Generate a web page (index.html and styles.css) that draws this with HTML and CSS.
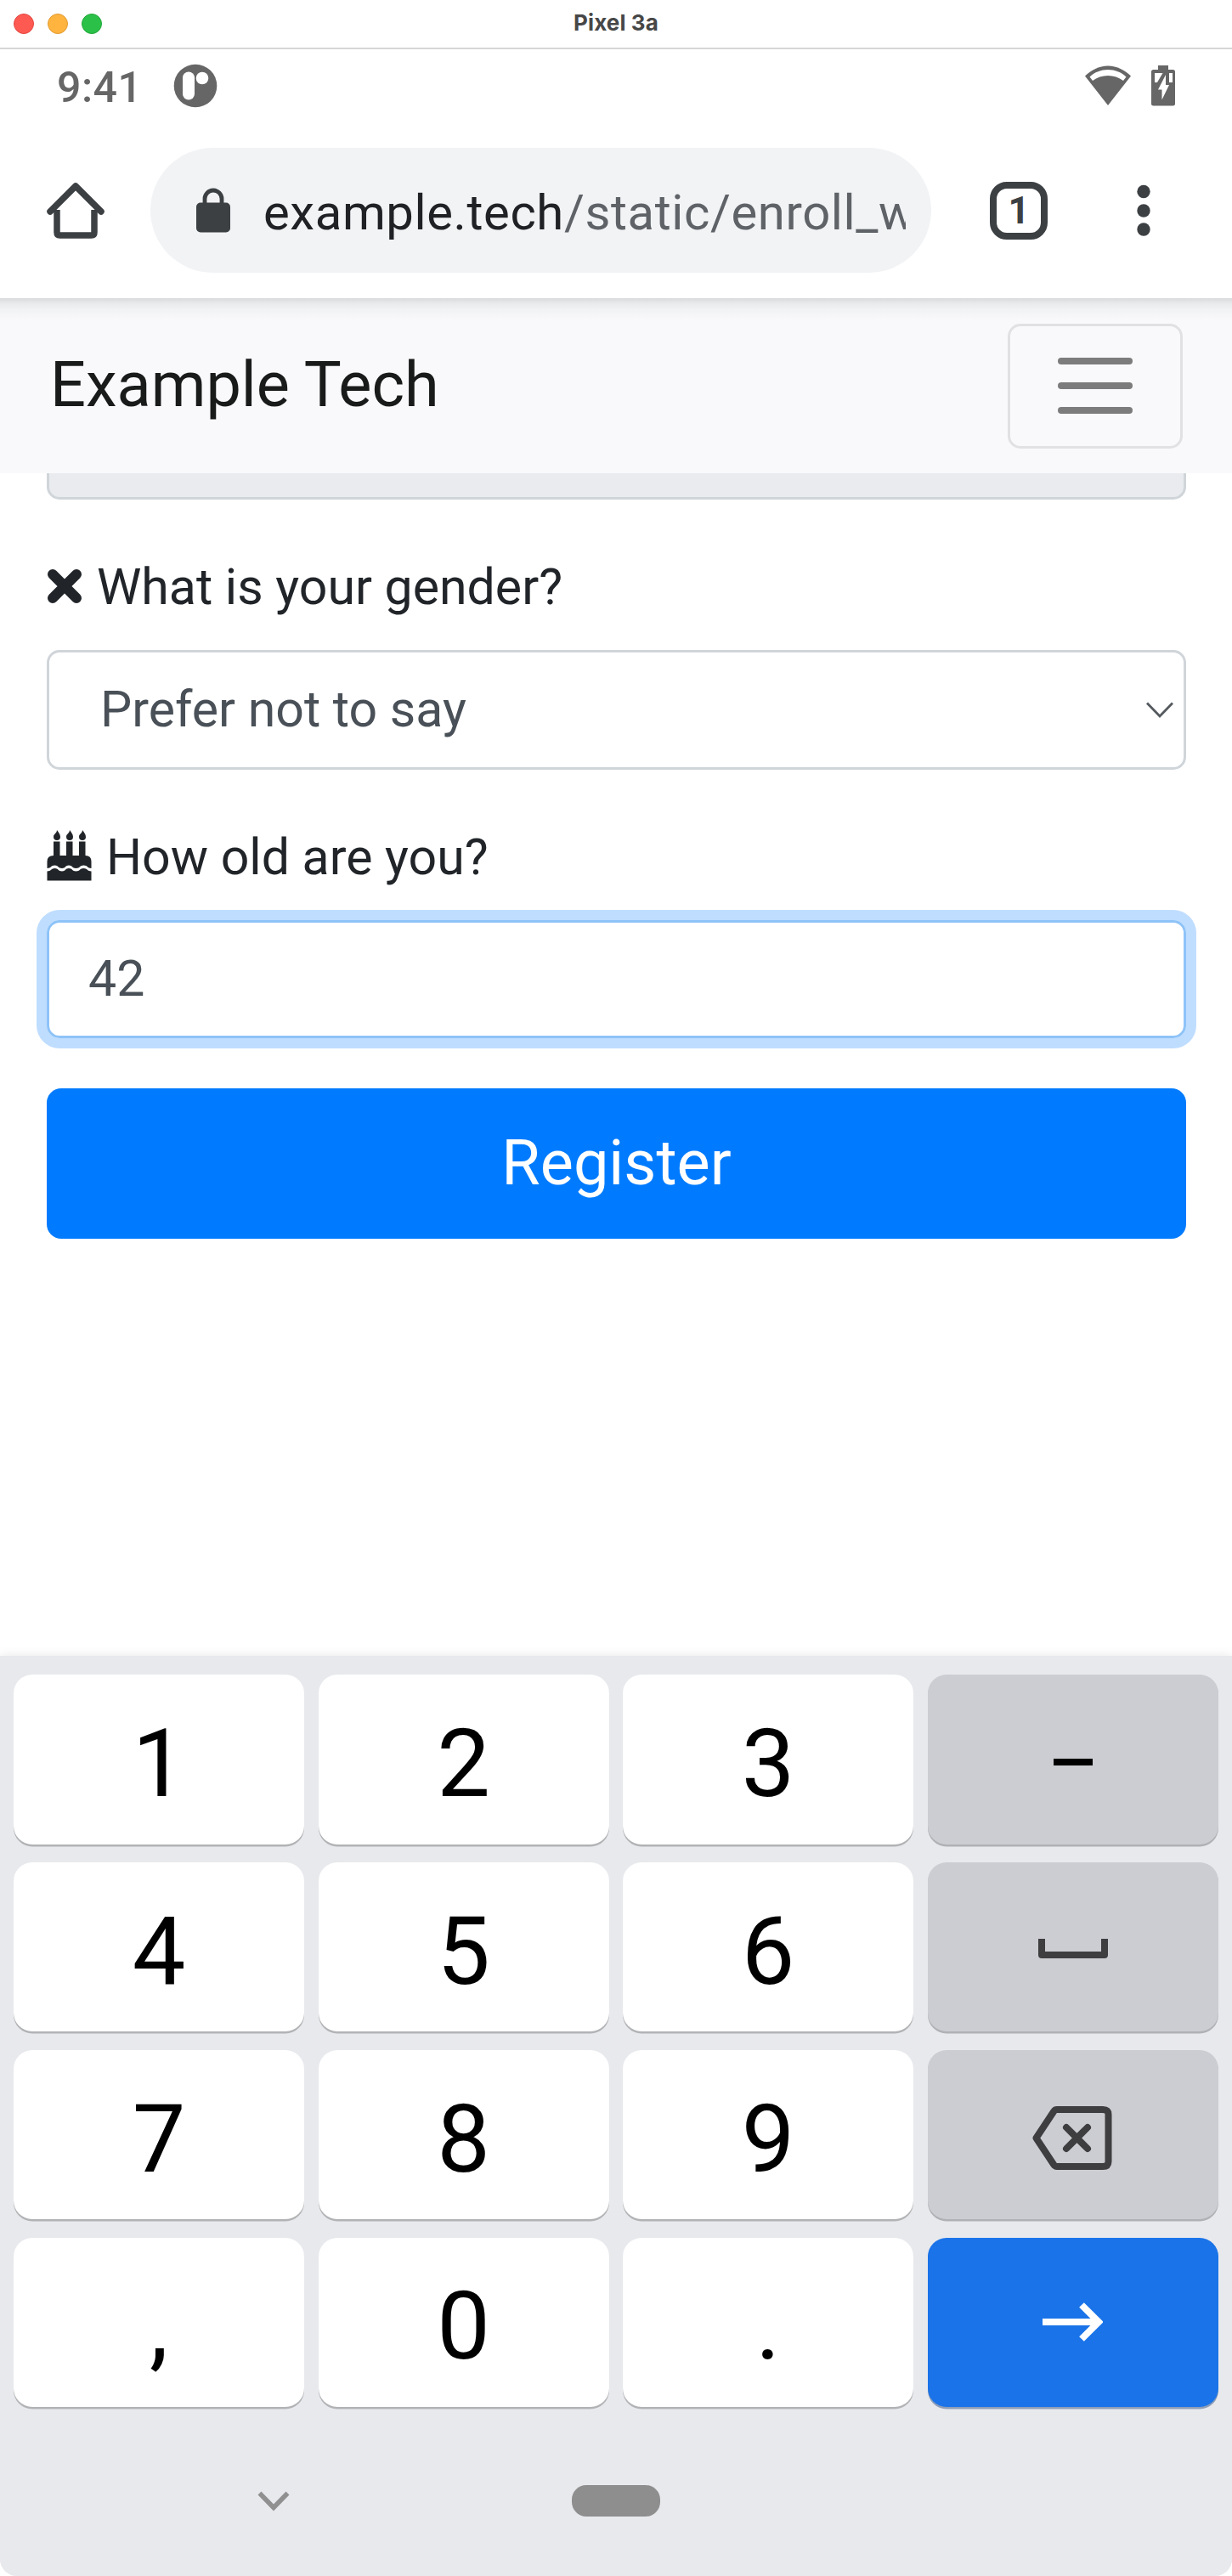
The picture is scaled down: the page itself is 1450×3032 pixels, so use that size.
FILE: index.html
```html
<!DOCTYPE html>
<html lang="en">
<head>
<meta charset="utf-8">
<title>Pixel 3a</title>
<link rel="stylesheet" href="styles.css">
</head>
<body>
<div class="window">
  <header class="titlebar">
    <div class="lights"><i class="light red"></i><i class="light yellow"></i><i class="light green"></i></div>
    <span class="window-title">Pixel 3a</span>
  </header>

  <div class="status">
    <span class="time">9:41</span>
    <svg class="app-icon" width="52" height="52" viewBox="0 0 52 52"><circle cx="26" cy="26" r="25.3" fill="#666"/><rect x="11" y="9.500" width="14" height="33" rx="7" fill="#fff"/><circle cx="34" cy="17" r="7.300" fill="#fff"/></svg>
    <svg class="wifi" width="56" height="50" viewBox="0 0 56 50"><path d="M28 1.500C17.500 1.500 8 6.500 1 13.500L28 48L55 13.500C48 6.500 38.500 1.500 28 1.500Z" fill="#666"/><path d="M6.500 14.500C18 3 38 3 49.500 14.500L46 19C36 11 20 11 10 19Z" fill="#fff"/></svg>
    <svg class="battery" width="30" height="50" viewBox="0 0 30 50"><path d="M9 1h12v5h5.500q2.500 0 2.500 2.500v37.500q0 2.500-2.500 2.500h-23q-2.500 0-2.500-2.500V8.500Q1 6 3.500 6H9z" fill="#666"/><path d="M5 10H14.500L8 21H5ZM22 10h4v11h-4zM18 12V24H22L13.500 41.500V29.500H9Z" fill="#fff"/></svg>
  </div>

  <div class="toolbar">
    <svg class="home" width="70" height="70" viewBox="0 0 70 70" fill="none" stroke="#3c4043"><path d="M13 34V60.500Q13 64 16.500 64H53.500Q57 64 57 60.500V34" stroke-width="7.500"/><path d="M5 36L35 6L65 36" stroke-width="7.500" stroke-linecap="round" stroke-linejoin="round"/></svg>
    <div class="omnibox">
      <svg class="lock" width="40" height="54" viewBox="0 0 40 54"><path d="M10 21V14a10 10 0 0 1 20 0v7" fill="none" stroke="#3c4043" stroke-width="4.800"/><rect y="18.500" width="40" height="35" rx="5" fill="#3c4043"/></svg>
      <span class="url">example.tech<span class="path">/static/enroll_w</span></span>
    </div>
    <div class="tabs">1</div>
    <svg class="dots" width="16" height="62" viewBox="0 0 16 62" fill="#3c4043"><circle cx="8" cy="8.500" r="7.700"/><circle cx="8" cy="31" r="7.700"/><circle cx="8" cy="53" r="7.700"/></svg>
  </div>

  <nav class="navbar">
    <span class="brand">Example Tech</span>
    <div class="toggler"><i></i><i></i><i></i></div>
  </nav>

  <main class="form">
    <div class="field disabled"></div>
    <div class="label gender">
      <svg width="42" height="42" viewBox="0 0 42 42" stroke="#212529" stroke-width="12" stroke-linecap="round"><path d="M7 7L35 35M35 7L7 35"/></svg>
      <span>What is your gender?</span>
    </div>
    <div class="field select">
      <span>Prefer not to say</span>
      <svg width="34" height="20" viewBox="0 0 34 20" fill="none" stroke="#555a5f" stroke-width="2.800"><path d="M2 1.500L17 17L32 1.500"/></svg>
    </div>
    <div class="label age">
      <svg width="53" height="60" viewBox="0 0 53 60" fill="#212529"><path d="M12 0q4 5 4 8a4 4 0 0 1-8 0q0-2.500 2.500-4.500Q12 2 12 0ZM27 0q4 5 4 8a4 4 0 0 1-8 0q0-2.500 2.500-4.500Q27 2 27 0ZM42 0q4 5 4 8a4 4 0 0 1-8 0q0-2.500 2.500-4.500Q42 2 42 0Z"/><path d="M8 13.500h7.500V30H23V13.500h7.500V30H38V13.500h7.500V30Q52.500 30 52.500 37V45C48 45 48 41.500 43.500 41.500C39 41.500 39 45 34.500 45C30 45 30 41.500 26 41.500C22 41.500 22 45 18 45C13.500 45 13.500 41.500 9.500 41.500C5 41.500 5 45 .5 45V37Q.5 30 8 30Z"/><path d="M.5 48.500C5 48.500 5.500 45 9.500 45C13.500 45 13.500 48.500 18 48.500C22 48.500 22 45 26 45C30 45 30 48.500 34.500 48.500C39 48.500 39 45 43.500 45C47.500 45 48 48.500 52.500 48.500V59.500H.5Z"/></svg>
      <span>How old are you?</span>
    </div>
    <div class="field focus">42</div>
    <div class="register">Register</div>
  </main>

  <section class="keyboard">
    <div class="keys">
      <div class="key">1</div><div class="key">2</div><div class="key">3</div>
      <div class="key side"><i class="minus"></i></div>
      <div class="key">4</div><div class="key">5</div><div class="key">6</div>
      <div class="key side"><svg class="space" width="82" height="23" viewBox="0 0 82 23" fill="none" stroke="#3e3e40" stroke-width="8" stroke-linejoin="round"><path d="M4 0V19H78V0"/></svg></div>
      <div class="key">7</div><div class="key">8</div><div class="key">9</div>
      <div class="key side"><svg class="back" width="94" height="75" viewBox="0 0 94 75" fill="none" stroke="#3e3e40" stroke-width="8" stroke-linejoin="round"><path d="M29 4H83Q89.500 4 89.500 10V65Q89.500 71 83 71H29Q26.500 71 25 68.500L4.500 37.500L25 6.500Q26.500 4 29 4Z"/><path d="M40 25L65 50M65 25L40 50" stroke-linecap="round"/></svg></div>
      <div class="key">,</div><div class="key">0</div><div class="key">.</div>
      <div class="key go"><svg class="arrow" width="72" height="48" viewBox="0 0 72 48" fill="none" stroke="#fff" stroke-width="8"><path d="M1 24H65M47 4L67 24L47 44"/></svg></div>
    </div>
    <div class="gesture">
      <svg width="38" height="24" viewBox="0 0 38 24" fill="none" stroke="#909091" stroke-width="5.500"><path d="M2.500 2.500L19 19.500L35.500 2.500"/></svg>
      <i class="handle"></i>
    </div>
  </section>
</div>
</body>
</html>
```
FILE: styles.css
```css
* { box-sizing: border-box; }
html { background: #fff; }
body { margin: 0; font-family: Roboto, "Liberation Sans", sans-serif; color: #212529; }
i { display: block; }
svg { display: block; flex: none; }
.window { width: 1450px; height: 3032px; display: flex; flex-direction: column; overflow: hidden; background: #fff; border-radius: 0 0 20px 20px; }

.titlebar { height: 58px; flex: none; display: grid; grid-template-columns: 1fr auto 1fr; align-items: center; border-bottom: 2px solid #d6d6d6; padding: 0 16px; }
.lights { display: flex; gap: 16px; }
.light { width: 24px; height: 24px; border-radius: 50%; border: 1px solid; }
.red { background: #ff5a52; border-color: #e2463f; }
.yellow { background: #ffb43f; border-color: #e09b34; }
.green { background: #2bc148; border-color: #22a63a; }
.window-title { font: 700 26px/30px Inter, sans-serif; color: #474747; letter-spacing: .1px; padding-bottom: 2px; }

.status { height: 86px; flex: none; display: flex; align-items: center; padding-left: 67px; color: #666; }
.time { width: 137px; font-size: 50px; font-weight: 500; letter-spacing: .5px; line-height: 60px; padding-top: 3px; }
.wifi { margin-left: auto; }
.battery { margin: 0 66px 0 22px; }

.toolbar { height: 207px; flex: none; display: flex; align-items: center; padding: 0 96px 0 54px; }
.omnibox { width: 919px; height: 147px; margin-left: 53px; border-radius: 74px; background: #f2f3f5; display: flex; align-items: center; padding: 0 30px 0 54px; }
.lock { margin-bottom: 2px; }
.url { flex: 1; min-width: 0; margin-left: 39px; overflow: hidden; white-space: nowrap; font-size: 58px; line-height: 74px; padding-top: 5px; color: #202124; letter-spacing: .6px; }
.path { color: #5f6368; }
.tabs { width: 68px; height: 68px; margin-left: 69px; border: 8px solid #3c4043; border-radius: 20px; color: #3c4043; font-size: 44px; font-weight: 700; line-height: 53px; text-align: center; }
.dots { margin-left: auto; }

.navbar { height: 206px; flex: none; display: flex; align-items: center; justify-content: space-between; padding: 0 58px 0 59px; background: linear-gradient(#d9dadc, #e9eaec 6px, #f2f3f5 14px, #f9f9fb 26px); }
.brand { font-size: 73.800px; line-height: 90px; color: #191a1a; padding-bottom: 2px; }
.toggler { width: 206px; height: 147px; border: 3px solid #e1e1e4; border-radius: 15px; display: flex; flex-direction: column; align-items: center; justify-content: center; gap: 21px; }
.toggler i { width: 88px; height: 8px; border-radius: 4px; background: #7c7c7d; }

.form { flex: 1; padding: 0 54px 0 55px; font-size: 59px; }
.field { height: 141px; border: 3px solid #d0d5da; border-radius: 15px; color: #495057; line-height: 132px; }
.disabled { height: 31px; background: #e9ebee; border-top: 0; border-radius: 0 0 15px 15px; }
.label { display: flex; align-items: center; height: 80px; line-height: 80px; }
.label span { padding-top: 1px; }
.gender { margin: 62px 0 35px; gap: 17px; }
.gender svg { margin-bottom: 1px; }
.select { display: flex; align-items: center; justify-content: space-between; padding: 0 11px 0 60px; }
.select span { padding-bottom: 2px; }
.age { margin: 62px 0 35px; gap: 17px; }
.age svg { margin-bottom: 2px; }
.focus { height: 139px; border-color: #8ec3f8; box-shadow: 0 0 0 12px #bfddff; padding-left: 46px; }
.register { height: 177px; margin-top: 59px; border-radius: 17px; background: #007bff; color: #fff; text-align: center; font-size: 73.800px; line-height: 176px; }

.keyboard { height: 1083px; flex: none; padding: 22px 16px 0; background: #e8e9ed; box-shadow: 0 0 12px rgba(0,0,0,.1); }
.keys { display: grid; grid-template-columns: repeat(4, 342px); grid-auto-rows: 199.500px; column-gap: 16.500px; row-gap: 21.400px; }
.key { display: flex; align-items: center; justify-content: center; border-radius: 22px; background: #fff; box-shadow: 0 2.500px 0 #b2b3b5; font-size: 111.500px; line-height: 130px; padding-top: 10px; color: #000; }
.side { background: #cccdd2; box-shadow: 0 2.500px 0 #b0b1b5; padding-top: 7px; }
.go { background: #1a73e8; box-shadow: 0 2.500px 0 #8c9db8; padding-top: 6px; }
.minus { width: 46px; height: 8px; background: #000; }
.space { margin-bottom: 3px; }
.back { margin: 0 2px 0 0; }
.arrow { margin: 0 2px 6px 0; }
.gesture { display: grid; grid-template-columns: 1fr 104px 1fr; align-items: center; padding: 92px 0 0; }
.gesture svg { margin-left: 287px; }
.handle { width: 104px; height: 37px; border-radius: 17px; background: #8e8e8f; }
```
